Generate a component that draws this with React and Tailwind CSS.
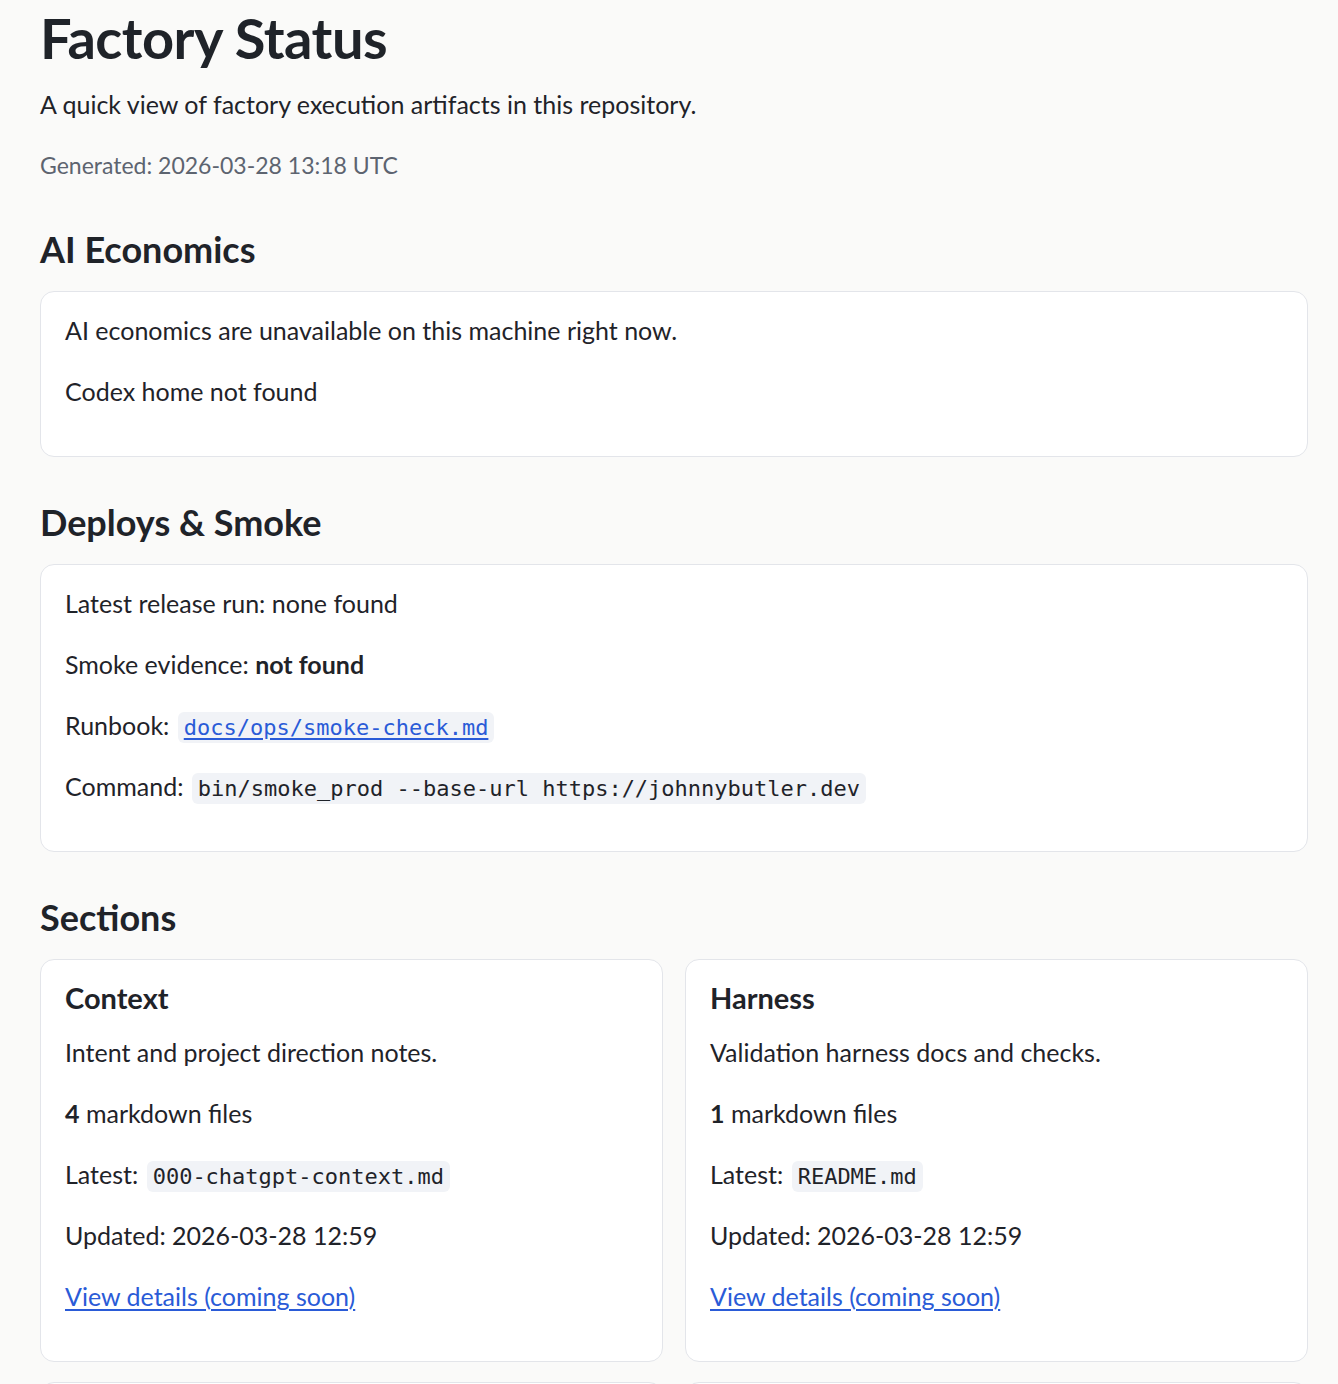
import React from "react";

const sections = [
	{
		title: "Context",
		description: "Intent and project direction notes.",
		count: 4,
		latest: "000-chatgpt-context.md",
		updated: "2026-03-28 12:59",
	},
	{
		title: "Harness",
		description: "Validation harness docs and checks.",
		count: 1,
		latest: "README.md",
		updated: "2026-03-28 12:59",
	},
	{
		title: "Plans",
		description: "Execution plans.",
		count: 2,
		latest: "plan.md",
		updated: "2026-03-28 12:59",
	},
	{
		title: "Runs",
		description: "Run logs.",
		count: 1,
		latest: "run.md",
		updated: "2026-03-28 12:59",
	},
];

const Code = ({ children }) => (
	<code className="font-['DejaVu_Sans_Mono',monospace] text-[22px] leading-none bg-[#f1f3f7] rounded-[6px] px-[6px] py-[3px] mx-[2px]">
		{children}
	</code>
);

const P = ({ children, last }) => (
	<p className={`text-[25px] leading-[37px] ${last ? "" : "mb-[24px]"}`}>{children}</p>
);

const Card = ({ children }) => (
	<div className="bg-white border border-[#e3e5ea] rounded-[14px] px-[24px] pt-[20px] pb-[46px]">
		{children}
	</div>
);

const H2 = ({ children }) => (
	<h2 className="text-[36px] leading-[40px] font-bold mt-[45px] mb-[22px]">
		{children}
	</h2>
);

export default function App() {
	return (
		<div className="min-h-screen bg-[#fafaf9] text-[#1f2329] font-['Lato',sans-serif]">
			<div className="pl-[40px] pr-[30px] pt-[8px] pb-[40px]">
				<h1 className="text-[56px] leading-[60px] font-bold tracking-[-0.5px]">Factory Status</h1>
				<p className="text-[25px] leading-[37px] mt-[18px]">
					A quick view of factory execution artifacts in this repository.
				</p>
				<p className="text-[23px] leading-[37px] mt-[24px] text-[#5d6470]">
					Generated: 2026-03-28 13:18 UTC
				</p>

				<H2>AI Economics</H2>
				<Card>
					<P>AI economics are unavailable on this machine right now.</P>
					<P last>Codex home not found</P>
				</Card>

				<H2>Deploys &amp; Smoke</H2>
				<Card>
					<P>Latest release run: none found</P>
					<P>
						Smoke evidence: <strong className="font-bold">not found</strong>
					</P>
					<P>
						Runbook:{" "}
						<a href="#" className="text-[#2a5bd7] underline underline-offset-[3px]">
							<Code>docs/ops/smoke-check.md</Code>
						</a>
					</P>
					<P last>
						Command: <Code>bin/smoke_prod --base-url https://johnnybutler.dev</Code>
					</P>
				</Card>

				<H2>Sections</H2>
				<div className="grid grid-cols-2 gap-x-[22px] gap-y-[20px]">
					{sections.map((s) => (
						<Card key={s.title}>
							<h3 className="text-[29px] leading-[36px] font-bold mb-[18px]">{s.title}</h3>
							<P>{s.description}</P>
							<P>
								<strong className="font-bold">{s.count}</strong> markdown files
							</P>
							<P>
								Latest: <Code>{s.latest}</Code>
							</P>
							<P>Updated: {s.updated}</P>
							<P last>
								<a href="#" className="text-[#2a5bd7] underline underline-offset-[3px]">
									View details (coming soon)
								</a>
							</P>
						</Card>
					))}
				</div>
			</div>
		</div>
	);
}
